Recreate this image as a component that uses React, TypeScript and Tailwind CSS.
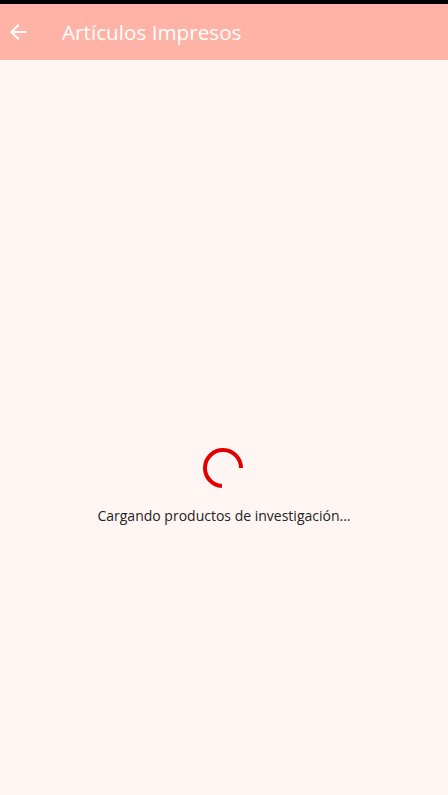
import React from "react";

export default function App() {
  return (
    <div className="w-[448px] h-[795px] flex flex-col bg-[#fff6f4]" style={{ fontFamily: '"Open Sans", "Noto Sans", sans-serif' }}>
      <div className="h-[4px] bg-black" />
      <div className="h-[56px] bg-[#ffb3a7] flex items-center">
        <div className="w-[62px] flex items-center pl-[6px]">
          <svg width="24" height="24" viewBox="0 0 24 24" fill="white">
            <path d="M20 11H7.83l5.59-5.59L12 4l-8 8 8 8 1.41-1.41L7.83 13H20v-2z" />
          </svg>
        </div>
        <div className="text-white text-[20.7px] leading-none">Artículos Impresos</div>
      </div>
      <div className="flex-1 flex flex-col items-center pt-[388px]">
        <svg width="40" height="40" viewBox="0 0 40 40" className="ml-[-2px]">
          <path d="M38 20 A18 18 0 1 0 19 38" fill="none" stroke="#e00000" strokeWidth="4" />
        </svg>
        <div className="mt-[18px] text-[14px] text-[#222] leading-[20px]">Cargando productos de investigación...</div>
      </div>
    </div>
  );
}
